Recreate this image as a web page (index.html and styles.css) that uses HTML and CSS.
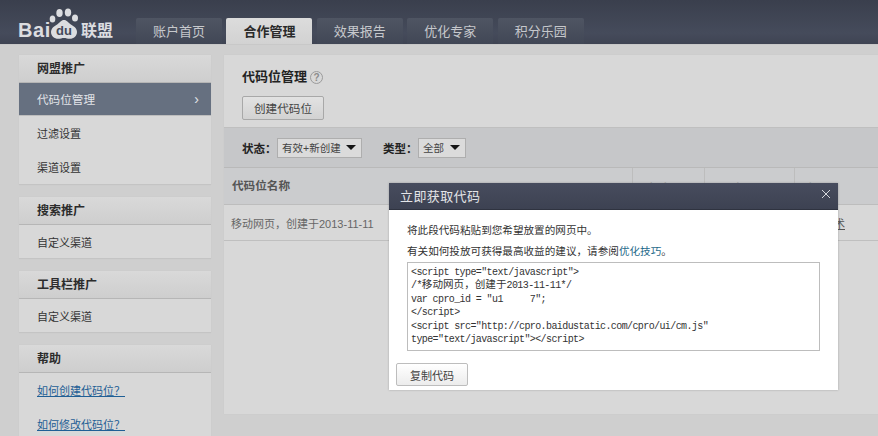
FILE: index.html
```html
<!DOCTYPE html>
<html lang="zh-CN">
<head>
<meta charset="utf-8">
<title>代码位管理</title>
<link rel="stylesheet" href="styles.css">
</head>
<body>
<header class="header">
  <div class="logo">
    <span class="logo-bai">Bai</span>
    <svg class="logo-paw" width="32" height="32" viewBox="0 0 32 32">
      <ellipse cx="4.5" cy="11" rx="2.8" ry="3.6" fill="#dcdde0"/>
      <ellipse cx="11.5" cy="5" rx="3.2" ry="4" fill="#dcdde0"/>
      <ellipse cx="20" cy="4.5" rx="3.2" ry="4" fill="#dcdde0"/>
      <ellipse cx="27" cy="10" rx="3" ry="3.6" fill="#dcdde0"/>
      <path d="M16 12c3 0 4 2.600 6.500 4.200 3 1.800 6.500 3.800 6.500 7.800 0 4-3.500 6.800-7 6.800-2.500 0-4-.8-6-.8s-3.500.8-6 .8c-3.500 0-7-2.800-7-6.800 0-4 3.500-6 6.500-7.800C12 14.600 13 12 16 12z" fill="#dcdde0"/>
      <text x="16" y="27" class="logo-du">du</text>
    </svg>
    <span class="logo-union">联盟</span>
  </div>
  <nav class="tabs">
    <a class="tab">账户首页</a>
    <a class="tab tab-active">合作管理</a>
    <a class="tab">效果报告</a>
    <a class="tab">优化专家</a>
    <a class="tab">积分乐园</a>
  </nav>
</header>

<div class="content">
  <aside class="sidebar">
    <section class="group">
      <h3 class="group-title">网盟推广</h3>
      <a class="item item-selected">代码位管理<span class="chevron">›</span></a>
      <a class="item item-tall">过滤设置</a>
      <a class="item item-tall">渠道设置</a>
    </section>
    <section class="group">
      <h3 class="group-title">搜索推广</h3>
      <a class="item">自定义渠道</a>
    </section>
    <section class="group">
      <h3 class="group-title">工具栏推广</h3>
      <a class="item">自定义渠道</a>
    </section>
    <section class="group">
      <h3 class="group-title">帮助</h3>
      <a class="item item-tall item-link">如何创建代码位？</a>
      <a class="item item-tall item-link">如何修改代码位？</a>
    </section>
  </aside>

  <main class="main">
    <div class="main-top">
      <h2 class="page-title">代码位管理<span class="help">?</span></h2>
      <button class="btn btn-create">创建代码位</button>
    </div>
    <div class="filters">
      <span class="filter-label">状态：</span>
      <span class="select select-status">有效+新创建<i class="caret"></i></span>
      <span class="filter-label filter-type">类型：</span>
      <span class="select select-type">全部<i class="caret"></i></span>
    </div>
    <div class="table">
      <div class="cell head head-name">代码位名称</div>
      <div class="cell head head-col head-status">状态</div>
      <div class="cell head head-col head-kind">类型</div>
      <div class="cell head head-col head-action">操作</div>
      <div class="cell row first">移动网页，创建于2013-11-11</div>
      <div class="cell row"></div>
      <div class="cell row"></div>
      <div class="cell row end"><a class="row-link">技术</a></div>
    </div>
  </main>
</div>

<div class="modal">
  <div class="modal-head">立即获取代码
    <svg class="modal-close" width="10" height="10" viewBox="0 0 10 10"><path d="M1 1l8 8M9 1l-8 8" stroke="#d5d7dc" stroke-width="1" fill="none"/></svg>
  </div>
  <div class="modal-body">
    <p class="modal-line">将此段代码粘贴到您希望放置的网页中。</p>
    <p class="modal-line">有关如何投放可获得最高收益的建议，请参阅<a class="tip-link">优化技巧</a>。</p>
    <div class="code">
      <div class="code-line">&lt;script type="text/javascript"&gt;</div>
      <div class="code-line">/*<span class="code-cjk">移动网页，创建于</span>2013-11-11*/</div>
      <div class="code-line">var cpro_id = "u1     7";</div>
      <div class="code-line">&lt;/script&gt;</div>
      <div class="code-line">&lt;script src="http://cpro.baidustatic.com/cpro/ui/cm.js"</div>
      <div class="code-line">type="text/javascript"&gt;&lt;/script&gt;</div>
    </div>
    <button class="btn btn-copy">复制代码</button>
  </div>
</div>
</body>
</html>
```
FILE: styles.css
```css
* { box-sizing: border-box; }
html, body { margin: 0; padding: 0; height: 436px; overflow: hidden; }
body {
  position: relative;
  background: #cfcfcf;
  font-family: "Liberation Sans", "Noto Sans CJK SC", sans-serif;
  font-size: 12px;
  color: #2a2a2a;
}
.header {
  height: 44px;
  display: flex;
  padding-left: 18px;
  background: linear-gradient(#3a3f4d, #454b5b 75%, #3f4453);
}
.logo { width: 118px; height: 44px; display: flex; align-items: flex-start; color: #dcdde0; }
.logo-bai { font-size: 20px; font-weight: 700; line-height: 24px; margin-top: 18px; width: 30px; letter-spacing: .6px; }
.logo-paw { margin-top: 8px; width: 32px; height: 32px; flex: none; }
.logo-du { font: 700 13px "Liberation Sans", sans-serif; fill: #454b5b; text-anchor: middle; }
.logo-union { font-size: 16px; font-weight: 700; line-height: 20px; margin: 21px 0 0 1px; }
.tabs { display: flex; gap: 4.45px; padding-top: 18px; }
.tab {
  width: 86px;
  height: 26px;
  line-height: 27px;
  text-align: center;
  font-size: 13px;
  color: #c6c8cc;
  background: linear-gradient(#4f5563, #414756);
  border-radius: 2px 2px 0 0;
}
.tab-active {
  font-weight: 700;
  color: #2a2a2a;
  background: linear-gradient(#dcdcdc, #d2d2d2);
}
.content { display: flex; padding: 10px 0 0 19px; border-top: 1px solid #c8c8c8; }
.sidebar { width: 192px; flex: none; display: flex; flex-direction: column; gap: 12px; }
.group { background: #d8d8d8; border-bottom: 1px solid #c4c4c4; box-shadow: 0 0 1px #c0c0c0; }
.group-title {
  margin: 0;
  height: 28px;
  line-height: 29px;
  padding-left: 18px;
  font-size: 12px;
  font-weight: 700;
  color: #2c2c2c;
  background: linear-gradient(#d9d9d9, #cecece);
  border-bottom: 1px solid #b6b6b6;
}
.item { display: flex; align-items: center; height: 33px; padding-left: 18px; font-size: 11px; color: #333; }
.item-tall { height: 34px; }
.item-selected {
  height: 33px;
  padding: 0 12px 1px 18px;
  justify-content: space-between;
  font-size: 11.6px;
  color: #e2e4e8;
  background: #667080;
  border-bottom: 1px solid #bdbdbd;
}
.chevron { font-size: 14px; line-height: 14px; color: #e2e4e8; }
.item-link { color: #1f5f95; text-decoration: underline; }
.main { flex: none; width: 654px; height: 359px; margin-left: 13px; background: #d8d8d8; box-shadow: 0 0 1px #c0c0c0; }
.main-top { height: 72px; padding: 12px 18px 0; }
.page-title { margin: 0; font-size: 13px; font-weight: 700; color: #222; line-height: 20px; display: flex; align-items: center; }
.help {
  width: 13px;
  height: 13px;
  margin-left: 3px;
  border: 1px solid #9b9b9b;
  border-radius: 50%;
  font-size: 10px;
  font-weight: 700;
  line-height: 11px;
  text-align: center;
  color: #8c8c8c;
}
.btn {
  display: block;
  padding: 0;
  font-family: inherit;
  font-size: 11.6px;
  color: #444;
  background: linear-gradient(#e2e2e2, #d2d2d2);
  border: 1px solid #a8a8a8;
  border-radius: 2px;
}
.btn-create { width: 82px; height: 24px; margin-top: 9px; }
.filters {
  height: 41px;
  display: flex;
  align-items: center;
  padding-left: 18px;
  background: #c6c7c9;
  border-top: 1px solid #bfbfbf;
  border-bottom: 1px solid #b9b9b9;
}
.filter-label { width: 35px; font-weight: 700; font-size: 11.5px; color: #222; }
.filter-type { margin-left: 21px; }
.select {
  height: 20px;
  display: flex;
  align-items: center;
  justify-content: space-between;
  padding: 0 5px 0 4px;
  font-size: 10.5px;
  color: #444;
  background: #dbdbdb;
  border: 1px solid #aeaeae;
}
.select-status { width: 85px; }
.select-type { width: 48px; }
.caret { width: 0; height: 0; border-left: 5px solid transparent; border-right: 5px solid transparent; border-top: 5px solid #151515; }
.table { display: grid; grid-template-columns: 408px 72px 90px 84px; grid-template-rows: 37px 36px; }
.cell { display: flex; align-items: center; }
.head { background: #cbccce; border-left: 1px solid #bdbdbd; border-bottom: 1px solid #bdbdbd; font-size: 11.6px; font-weight: 700; color: #555; }
.head-name { border-left: 0; padding: 0 0 2px 8px; }
.head-col { padding-top: 3px; }
.head-status { padding-left: 15px; }
.head-kind { padding-left: 27px; }
.head-action { padding-left: 13px; }
.row { background: #d8d8d8; border-bottom: 1px solid #bfbfbf; font-size: 11px; color: #666; }
.first { padding-left: 7px; }
.end { justify-content: flex-end; padding-right: 33px; }
.row-link { color: #555; text-decoration: underline; }
.modal {
  position: absolute;
  left: 389px;
  top: 183px;
  width: 449px;
  height: 207px;
  background: #fff;
  box-shadow: 0 0 2px rgba(90, 90, 90, .4);
}
.modal-head {
  position: relative;
  height: 27px;
  padding-left: 11px;
  line-height: 27px;
  font-size: 13px;
  letter-spacing: .4px;
  color: #e4e5e8;
  background: linear-gradient(#474c5e, #3d4252);
  border-bottom: 1px solid #2f3340;
}
.modal-close { position: absolute; right: 7px; top: 6px; }
.modal-body { padding: 10px 18px 0 7px; }
.modal-line { margin: 0 0 0 11px; font-size: 10.6px; line-height: 20.5px; color: #333; }
.tip-link { color: #1f6a8a; }
.code {
  margin: 1px 0 0 11px;
  width: 413px;
  height: 89px;
  padding: 3px;
  border: 1px solid #bdbdbd;
  font-family: "Liberation Mono", "Noto Sans CJK SC", monospace;
  font-size: 10px;
  letter-spacing: -.6px;
  color: #333;
}
.code-line { height: 13.4px; line-height: 13.4px; white-space: pre; }
.code-cjk { font-family: "Noto Sans CJK SC", sans-serif; font-size: 10.6px; letter-spacing: 0; line-height: 1; }
.btn-copy { width: 72px; height: 23px; margin-top: 12px; font-size: 11px; background: linear-gradient(#fff, #ececec); border-color: #bdbdbd; }
```
